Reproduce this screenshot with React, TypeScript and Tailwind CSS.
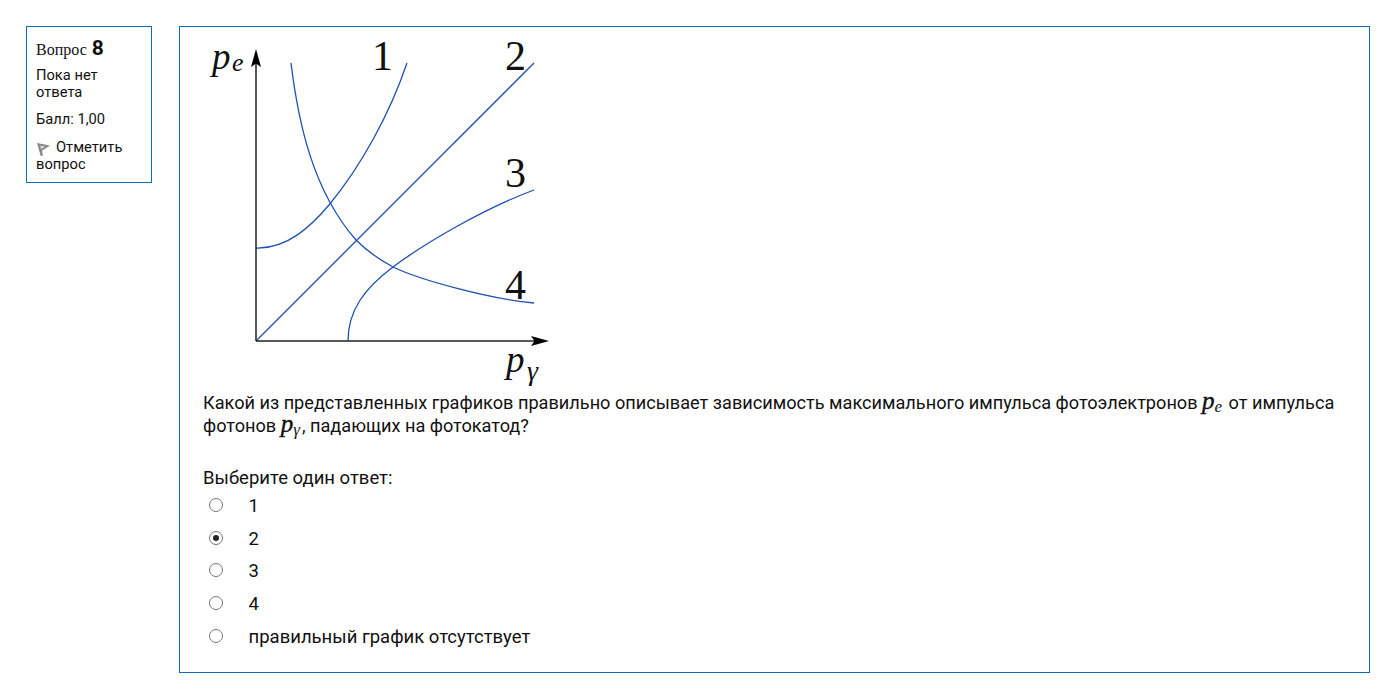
const OPTIONS = ['1', '2', '3', '4', 'правильный график отсутствует'];

function Graph() {
  return (
    <svg width="360" height="360" viewBox="203 27 360 360" className="block">
      <g fill="none" stroke="#1f4fb0" strokeWidth="1.3">
        <path d="M256 248C288 249 312 225 329 205C362 165 390 113 407 63" />
        <path d="M256 341L534 63" />
        <path d="M348 341C348 310 365 288 393 267C425 243 485 208 534 190" />
        <path d="M291 63C298 120 312 190 356 240C368 252 380 260 393 267C420 280 490 299 534 303" />
      </g>
      <g stroke="#222" strokeWidth="1.5">
        <path d="M256 341V60" />
        <path d="M256 341H538" />
      </g>
      <path d="M256 49L261 67L256 63.5L251 67Z" fill="#000" />
      <path d="M549 341L531 336L534.5 341L531 346Z" fill="#000" />
      <g fontFamily="'Liberation Serif', serif" fill="#111">
        <text x="372" y="70" fontSize="42">1</text>
        <text x="505" y="70" fontSize="42">2</text>
        <text x="505" y="187" fontSize="42">3</text>
        <text x="505" y="299" fontSize="42">4</text>
        <text x="212" y="69" fontSize="37" fontStyle="italic">p</text>
        <text x="232" y="71" fontSize="26" fontStyle="italic">e</text>
        <text x="506" y="372" fontSize="37" fontStyle="italic">p</text>
        <text x="527" y="380" fontSize="28" fontStyle="italic">γ</text>
      </g>
    </svg>
  );
}

function Sym({ sub }: { sub: string }) {
  return (
    <span className="font-['Liberation_Serif',serif] italic leading-[0] mr-[2px]">
      <span className="text-[25px] leading-[0] [-webkit-text-stroke:0.4px_#111]">p</span>
      <span className="text-[17px] leading-[0] relative top-[3px]">{sub}</span>
    </span>
  );
}

function Radio({ checked }: { checked: boolean }) {
  return (
    <span className="w-[14px] h-[14px] rounded-full border border-[#767676] bg-white flex items-center justify-center">
      {checked && <span className="w-[6px] h-[6px] rounded-full bg-[#222]" />}
    </span>
  );
}

export default function App() {
  return (
    <div className="min-h-[691px] bg-white text-[#111] font-['Roboto',sans-serif] flex items-start gap-[27px] pt-[26px] pl-[26px] pr-[7px]">
      {/* Question info */}
      <div className="w-[126px] h-[157px] shrink-0 border border-[#0f6cbf] pt-[9px] px-[9px] text-[14.7px] leading-[17px]">
        <div className="h-[24px] flex items-baseline pt-[4px]">
          <span className="font-['Liberation_Serif',serif] text-[16px] mr-[5px]">Вопрос</span>
          <span className="text-[21px] font-bold">8</span>
        </div>
        <div className="mt-[7px]">Пока нет ответа</div>
        <div className="mt-[10px]">Балл: 1,00</div>
        <div className="mt-[11px]">
          <svg width="16" height="16" viewBox="0 0 16 16" className="inline-block mr-[4px] mb-[-3px]">
            <path d="M1 1L14 3.5L8 7.5L6.2 8.5L6.7 14L4.7 14Z" fill="#8a8a8a" />
            <path d="M4 3.8L9 4.4L5.4 7.2Z" fill="#dcdcdc" />
          </svg>
          Отметить вопрос
        </div>
      </div>

      {/* Question */}
      <div className="flex-1 h-[647px] border border-[#0f6cbf] pl-[23px] pr-[23px] text-[18.5px] leading-[24px]">
        <Graph />
        <p className="mt-[4px] text-[18.15px] leading-[23px]">
          Какой из представленных графиков правильно описывает зависимость максимального импульса фотоэлектронов <Sym sub="e" /> от импульса фотонов <Sym sub="γ" />, падающих на фотокатод?
        </p>
        <div className="mt-[29px]">Выберите один ответ:</div>
        <div className="mt-[-1px] flex flex-col">
          {OPTIONS.map((opt) => (
            <label key={opt} className="h-[32.6px] flex items-center">
              <span className="pl-[6px] w-[45.5px] shrink-0">
                <Radio checked={opt === '2'} />
              </span>
              <span className="relative top-px">{opt}</span>
            </label>
          ))}
        </div>
      </div>
    </div>
  );
}
